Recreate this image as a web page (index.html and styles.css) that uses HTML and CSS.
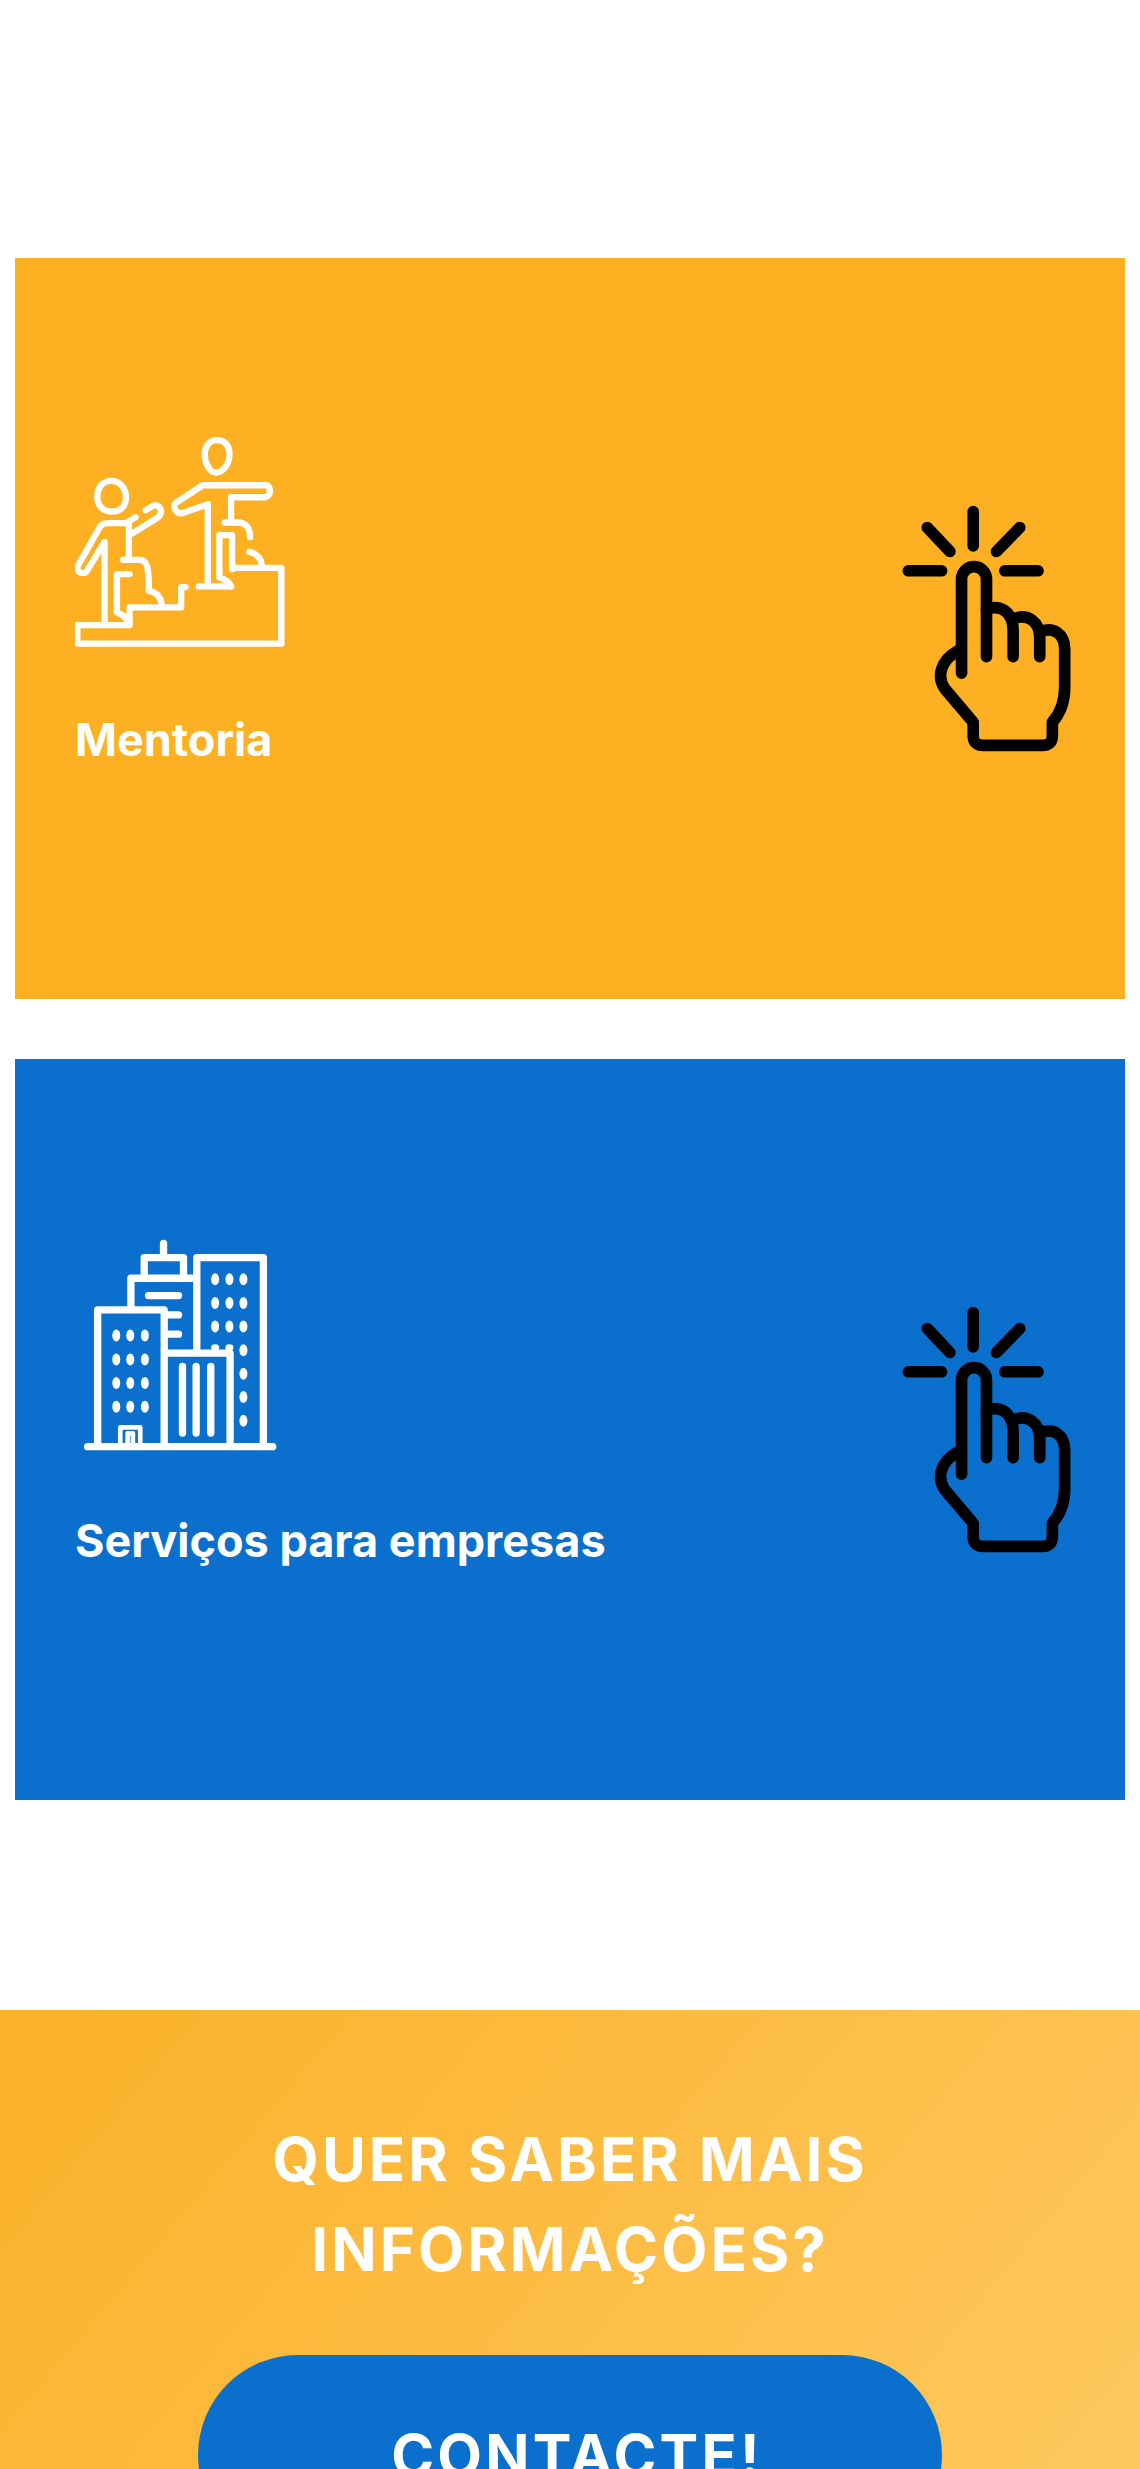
FILE: index.html
```html
<!DOCTYPE html>
<html lang="pt">
<head>
    <meta charset="UTF-8">
    <meta name="viewport" content="width=device-width, initial-scale=1.0">
    <title>Mentoria</title>
    <link rel="stylesheet" href="styles.css">
</head>
<body>

    <div class="cards">
        <a class="card card-orange" href="#">
            <div class="card-info">
                <svg class="card-icon" viewBox="106 83 640 640" fill="none" stroke="#fff" stroke-width="19" stroke-linecap="round" stroke-linejoin="round">
                    <path d="M532 92c26 0 40 20 38 48c-2 28-22 50-40 50c-18 0-32-24-34-50c-2-26 12-48 36-48z"/>
                    <path d="M215 215c28 0 44 24 44 48c0 28-14 44-44 44c-26 0-42-20-42-44c0-28 16-48 42-48z"/>
                    <path d="M478 532H575M505 525V285L428 312C412 316 396 292 410 280L490 228H680C696 228 696 264 676 264H575V340H556M575 340H596C622 340 632 360 632 384"/>
                    <path d="M578 480V378H540V505C556 510 570 518 575 532M630 428C648 432 665 444 668 470"/>
                    <path d="M578 476H726V704H113V648H270V595H425V534H438"/>
                    <path d="M195 635V398L140 488C128 500 104 484 116 468L178 358C184 346 192 342 205 342H268V452H250M268 452H300C322 452 328 470 328 545C348 548 362 562 366 582"/>
                    <path d="M270 495H232V610C250 616 262 626 268 645M270 378L356 324C374 310 360 280 340 290L318 303M265 338L288 324"/>
                </svg>
                <h3 class="card-title">Mentoria</h3>
            </div>
            <svg class="card-click" viewBox="60 40 520 750" fill="none" stroke="#000" stroke-width="35" stroke-linecap="round" stroke-linejoin="round">
                <path d="M280 62V165M142 110L210 182M420 110L350 182M85 240H185M375 240H475"/>
                <path d="M245 548V265a37.5 37.5 0 0 1 75 0V498"/>
                <path d="M320 355C365 340 400 365 400 420V498M400 385C445 365 480 395 480 440V498"/>
                <path d="M480 425C520 405 555 430 555 475V590C555 640 540 670 518 695V735Q518 765 488 765H310Q280 765 280 735V695L195 595C170 560 180 510 235 480"/>
            </svg>
        </a>

        <a class="card card-blue" href="#">
            <div class="card-info">
                <svg class="card-icon" viewBox="44 49 640 640" fill="none" stroke="#fff" stroke-width="22" stroke-linecap="round" stroke-linejoin="round">
                    <path d="M82 676H638M112 676V265H312V676M212 265V170H410M252 170V108H370V170M310 108V65M410 380V108H610V676M312 395H510V676"/>
                    <path d="M265 222H355M322 280H355M322 338H355M367 435V635M408 435V635M452 435V635"/>
                    <path d="M180 670V618H240V670M202 665V636H218V665" stroke-width="14"/>
                    <g fill="#fff" stroke="none">
                        <ellipse cx="168" cy="342" rx="12" ry="18"/><ellipse cx="210" cy="342" rx="12" ry="18"/><ellipse cx="254" cy="342" rx="12" ry="18"/>
                        <ellipse cx="168" cy="414" rx="12" ry="18"/><ellipse cx="210" cy="414" rx="12" ry="18"/><ellipse cx="254" cy="414" rx="12" ry="18"/>
                        <ellipse cx="168" cy="485" rx="12" ry="18"/><ellipse cx="210" cy="485" rx="12" ry="18"/><ellipse cx="254" cy="485" rx="12" ry="18"/>
                        <ellipse cx="168" cy="556" rx="12" ry="18"/><ellipse cx="210" cy="556" rx="12" ry="18"/><ellipse cx="254" cy="556" rx="12" ry="18"/>
                        <ellipse cx="465" cy="173" rx="12" ry="18"/><ellipse cx="508" cy="173" rx="12" ry="18"/><ellipse cx="550" cy="173" rx="12" ry="18"/>
                        <ellipse cx="465" cy="244" rx="12" ry="18"/><ellipse cx="508" cy="244" rx="12" ry="18"/><ellipse cx="550" cy="244" rx="12" ry="18"/>
                        <ellipse cx="465" cy="315" rx="12" ry="18"/><ellipse cx="508" cy="315" rx="12" ry="18"/><ellipse cx="550" cy="315" rx="12" ry="18"/>
                        <ellipse cx="465" cy="378" rx="12" ry="10"/><ellipse cx="508" cy="378" rx="12" ry="10"/>
                        <ellipse cx="550" cy="386" rx="12" ry="18"/><ellipse cx="550" cy="457" rx="12" ry="18"/><ellipse cx="550" cy="527" rx="12" ry="18"/><ellipse cx="550" cy="598" rx="12" ry="18"/>
                    </g>
                </svg>
                <h3 class="card-title">Serviços para empresas</h3>
            </div>
            <svg class="card-click" viewBox="60 40 520 750" fill="none" stroke="#000" stroke-width="35" stroke-linecap="round" stroke-linejoin="round">
                <path d="M280 62V165M142 110L210 182M420 110L350 182M85 240H185M375 240H475"/>
                <path d="M245 548V265a37.5 37.5 0 0 1 75 0V498"/>
                <path d="M320 355C365 340 400 365 400 420V498M400 385C445 365 480 395 480 440V498"/>
                <path d="M480 425C520 405 555 430 555 475V590C555 640 540 670 518 695V735Q518 765 488 765H310Q280 765 280 735V695L195 595C170 560 180 510 235 480"/>
            </svg>
        </a>
    </div>

    <div class="contact">
        <h2 class="contact-title">QUER SABER MAIS INFORMAÇÕES?</h2>
        <a class="contact-btn" href="#">CONTACTE!</a>
    </div>

</body>
</html>
```

FILE: styles.css
```css
html, body { margin: 0; height: 2469px; overflow: hidden; }
body { font-family: Inter, "Liberation Sans", sans-serif; background-color: #fff; color: #fff; }
a { color: inherit; text-decoration: none; }

.cards { padding: 258px 15px 210px; display: flex; flex-direction: column; gap: 60px; }
.card { height: 741px; padding: 0 52px 0 60px; display: flex; justify-content: space-between; align-items: center; box-sizing: border-box; }
.card-orange { background-color: #fdb122; }
.card-blue { background-color: #0b70cd; }
.card-info { margin-bottom: 51px; }
.card-icon { width: 213px; height: 213px; display: block; }
.card-title { font-size: 45px; font-weight: 700; line-height: 60px; margin: 60px 0 0; }
.card-click { width: 173px; height: 250px; display: block; }

.contact { height: 459px; padding-top: 104px; box-sizing: border-box; background: linear-gradient(130deg, #fbb128 0%, #fec85e 100%); text-align: center; overflow: hidden; }
.contact-title { width: 700px; margin: 0 auto; font-size: 60px; font-weight: 700; line-height: 90px; letter-spacing: 3px; }
.contact-btn { display: block; width: 744px; margin: 61px auto 0; padding: 55px 0 55px 14px; box-sizing: border-box; background-color: #0b70cd; border-radius: 100px; font-size: 58px; font-weight: 700; line-height: 90px; letter-spacing: 3.2px; }
```
